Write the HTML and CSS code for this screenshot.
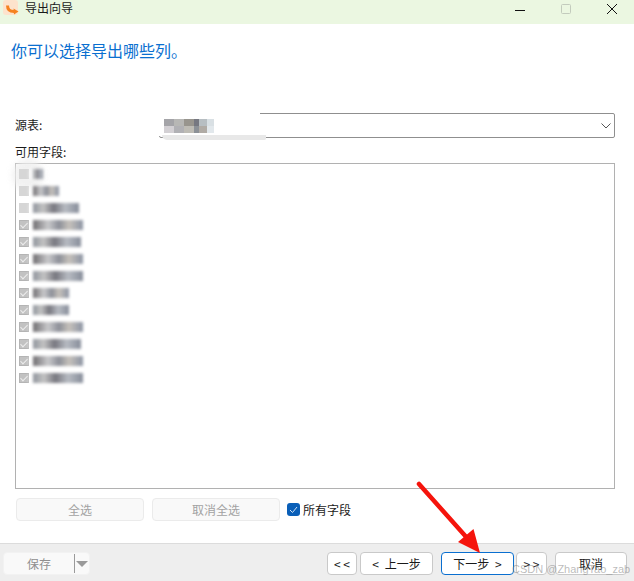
FILE: index.html
```html
<!DOCTYPE html>
<html lang="zh-CN">
<head>
  <meta charset="UTF-8" />
  <title>导出向导</title>
  <link rel="stylesheet" href="styles.css">
</head>
<body>
  <header class="titlebar">
    <div class="app-title">
      <svg class="app-icon" width="16" height="16" viewBox="0 0 16 16">
        <rect x="0" y="0" width="15" height="15" rx="3" fill="#fde3cc"/>
        <path d="M4.5 5.5c0 4 2.500 6 6.500 6" fill="none" stroke="#f58220" stroke-width="3"/>
        <path d="M10.500 8.500l5 3-4.500 3z" fill="#f58220"/>
      </svg>
      <span>导出向导</span>
    </div>
    <div class="win-controls">
      <svg width="12" height="12" viewBox="0 0 12 12"><path d="M1 7.500h10" stroke="#111" stroke-width="1"/></svg>
      <svg width="12" height="12" viewBox="0 0 12 12"><rect x="1.500" y="1.500" width="9" height="9" rx="1" fill="none" stroke="#c3cbbd"/></svg>
      <svg width="12" height="12" viewBox="0 0 12 12"><path d="M1 1l10 10M11 1L1 11" stroke="#111" stroke-width="1"/></svg>
    </div>
  </header>

  <main class="content">
    <h1 class="heading">你可以选择导出哪些列。</h1>

    <div class="source-row">
      <label class="source-label">源表:</label>
      <div class="select">
        <span class="select-value"><i></i></span>
        <svg class="select-arrow" width="10" height="6" viewBox="0 0 10 6"><path d="M.5.5L5 5 9.500.5" fill="none" stroke="#555"/></svg>
      </div>
    </div>

    <div class="fields-label">可用字段:</div>
    <div class="fields-list">
      <span class="list-smudge"></span>
      <div class="field-row"><span class="check faded"></span><span class="blur w10"></span></div>
      <div class="field-row"><span class="check faded"></span><span class="blur w26"></span></div>
      <div class="field-row"><span class="check faded"></span><span class="blur w46"></span></div>
      <div class="field-row"><span class="check"></span><span class="blur w50"></span></div>
      <div class="field-row"><span class="check"></span><span class="blur w48"></span></div>
      <div class="field-row"><span class="check"></span><span class="blur w50"></span></div>
      <div class="field-row"><span class="check"></span><span class="blur w50"></span></div>
      <div class="field-row"><span class="check"></span><span class="blur w36"></span></div>
      <div class="field-row"><span class="check"></span><span class="blur w36"></span></div>
      <div class="field-row"><span class="check"></span><span class="blur w50"></span></div>
      <div class="field-row"><span class="check"></span><span class="blur w48"></span></div>
      <div class="field-row"><span class="check"></span><span class="blur w50"></span></div>
      <div class="field-row"><span class="check"></span><span class="blur w50"></span></div>
    </div>

    <div class="list-actions">
      <button class="btn-off">全选</button>
      <button class="btn-off">取消全选</button>
      <label class="all-fields">
        <span class="check-on">
          <svg width="9" height="8" viewBox="0 0 9 8"><path d="M1 4l2.500 2.500L8 1" fill="none" stroke="#cfe2f7" stroke-width="1"/></svg>
        </span>
        所有字段
      </label>
    </div>
  </main>

  <footer class="footer">
    <div class="save-btn">
      <span class="save-text">保存</span>
      <span class="save-caret"></span>
    </div>
    <div class="nav">
      <button class="btn btn-jump">&lt; &lt;</button>
      <button class="btn btn-prev">&lt; 上一步</button>
      <button class="btn btn-next">下一步 &gt;</button>
      <button class="btn btn-jump btn-last">&gt; &gt;</button>
      <button class="btn btn-cancel">取消</button>
    </div>
  </footer>

  <!-- annotation on top of the screenshot -->
  <svg class="arrow" width="80" height="80" viewBox="0 0 80 80">
    <path d="M3 3L52 58" stroke="#f5140c" stroke-width="4.500" stroke-linecap="round"/>
    <path d="M42 61L57.500 48 64 72z" fill="#f5140c"/>
  </svg>
  <div class="watermark">CSDN @ZhangTao_zab</div>
</body>
</html>
```

FILE: styles.css
```css
* {
  margin: 0;
  padding: 0;
  box-sizing: border-box;
}

html, body {
  width: 634px;
  height: 581px;
  overflow: hidden;
}

body {
  position: relative;
  display: flex;
  flex-direction: column;
  font-family: "Noto Sans CJK SC", "Liberation Sans", sans-serif;
  font-size: 12px;
  color: #1a1a1a;
  background-color: #ffffff;
}

.titlebar {
  display: flex;
  justify-content: space-between;
  align-items: center;
  height: 24px;
  flex: none;
  padding: 0 16px 9px 3px;
  background-color: #ebf7e1;
}

.app-title {
  display: flex;
  align-items: center;
  gap: 6px;
  height: 15px;
}

.app-icon {
  margin-top: 1px;
}

.win-controls {
  display: flex;
  gap: 34px;
  margin-top: 3px;
}

.content {
  flex: 1;
  padding: 0 19px 0 15px;
  display: flex;
  flex-direction: column;
}

.heading {
  font-size: 16px;
  font-weight: 400;
  line-height: 20px;
  margin: 16px 0 0 -4px;
  color: #0a6fd0;
}

.source-row {
  display: flex;
  align-items: center;
  margin-top: 53px;
  height: 25px;
}

.source-label {
  width: 144px;
  flex: none;
  margin-top: -2px;
}

.select {
  flex: 1;
  display: flex;
  justify-content: flex-end;
  align-items: center;
  height: 25px;
  padding-right: 3px;
  border: 1px solid #8f8f8f;
  border-radius: 2px;
  position: relative;
}

.select-value {
  position: absolute;
  left: -2px;
  top: -4px;
  width: 102px;
  height: 26px;
  background-color: #ffffff;
}

.select-value::after {
  content: "";
  position: absolute;
  left: 4px;
  top: 25px;
  width: 104px;
  height: 5px;
  background-color: #e8e8e8;
  border-radius: 0 0 3px 8px;
}

.select-value i {
  display: block;
  width: 50px;
  height: 14px;
  margin: 9px 0 0 6px;
  background-image:
    linear-gradient(90deg, #9b9b9f 0 20%, #b0b0ad 20% 40%, #8d8a82 40% 60%, #686a74 60% 70%, #b0b8bc 70% 85%, #d5dde2 85%),
    linear-gradient(90deg, #cfccd0 0 20%, #a9a9ae 20% 40%, #b7b5ae 40% 60%, #80868c 60% 70%, #a8a29c 70% 85%, #dfe6ea 85%);
  background-size: 100% 50%;
  background-position: top, bottom;
  background-repeat: no-repeat;
  opacity: 0.9;
}

.fields-label {
  margin-top: 6px;
  line-height: 16px;
  height: 19px;
}

.fields-list {
  position: relative;
  height: 326px;
  padding: 1px 0 0 3px;
  border: 1px solid #b1b1b1;
}

/* pale blot over the corner of the list */
.list-smudge {
  position: absolute;
  left: -4px;
  top: -5px;
  width: 32px;
  height: 32px;
  border-radius: 50%;
  background-color: #eeeeee;
  opacity: 0.8;
  filter: blur(3px);
}

.field-row {
  position: relative;
  display: flex;
  align-items: center;
  gap: 4px;
  height: 17px;
}

.check {
  position: relative;
  width: 10px;
  height: 10px;
  background-color: #c2c2c2;
  border: 1px solid #b4b4b4;
}

.check::after {
  content: "";
  position: absolute;
  left: 2px;
  top: 0;
  width: 3px;
  height: 6px;
  border: solid #ececec;
  border-width: 0 1px 1px 0;
  transform: rotate(45deg);
}

.faded {
  background-color: #d6d6d6;
  border-color: #d6d6d6;
}

.faded::after {
  display: none;
}

.blur {
  display: block;
  height: 10px;
  background-image: linear-gradient(90deg, #8f949c, #c3c3c3 22%, #77777f 45%, #b7bbc2 70%, #868c99);
  box-shadow: -3px 0 3px #ffffff;
  filter: blur(1.500px);
}

.field-row:nth-of-type(even) .blur {
  background-image: linear-gradient(90deg, #6f6d70, #c9c9cb 30%, #8c8f98 52%, #c6c1bb 72%, #8b93a3);
}

.w10 { width: 10px; }
.w26 { width: 26px; }
.w36 { width: 36px; }
.w46 { width: 46px; }
.w48 { width: 48px; }
.w50 { width: 50px; }

.list-actions {
  display: flex;
  align-items: center;
  gap: 8px;
  margin-top: 9px;
  padding-left: 1px;
}

.btn-off {
  width: 128px;
  height: 23px;
  font: inherit;
  color: #a2a2a2;
  background-color: #f9f9f9;
  border: 1px solid #ebebeb;
  border-radius: 4px;
}

.all-fields {
  display: flex;
  align-items: center;
  gap: 3px;
  margin-left: -1px;
}

.check-on {
  display: flex;
  justify-content: center;
  align-items: center;
  width: 13px;
  height: 13px;
  background-color: #0a5fb8;
  border-radius: 3px;
}

.footer {
  display: flex;
  justify-content: space-between;
  height: 38px;
  flex: none;
  padding: 8px 7px 0 3px;
  background-color: #eeeeee;
  border-top: 1px solid #dcdcdc;
}

.save-btn {
  display: flex;
  align-items: center;
  width: 87px;
  height: 23px;
  background-color: #f9f9f9;
  border: 1px solid #f2f2f2;
  border-radius: 4px;
  color: #8f8f8f;
}

.save-text {
  width: 70px;
  text-align: center;
}

.save-caret {
  position: relative;
  width: 1px;
  height: 19px;
  background-color: #9a9a9a;
}

.save-caret::after {
  content: "";
  position: absolute;
  left: 2px;
  top: 7px;
  border-style: solid;
  border-width: 6px 6px 0;
  border-color: #9a9a9a transparent transparent;
}

.nav {
  display: flex;
}

.btn {
  height: 23px;
  font: inherit;
  word-spacing: 3px;
  color: #1a1a1a;
  background-color: #ffffff;
  border: 1px solid #c9c9c9;
  border-radius: 4px;
  white-space: pre;
}

.btn-jump {
  width: 30px;
  word-spacing: 0;
}

.btn-prev {
  width: 73px;
  margin-left: 3px;
}

.btn-next {
  width: 73px;
  margin-left: 8px;
  border-color: #0a6fd0;
}

.btn-last {
  width: 31px;
  margin-left: 2px;
}

.btn-cancel {
  width: 72px;
  margin-left: 8px;
}

.arrow {
  position: absolute;
  left: 416px;
  top: 481px;
  pointer-events: none;
}

.watermark {
  position: absolute;
  left: 512px;
  top: 561px;
  font-family: "Liberation Sans", sans-serif;
  font-size: 11px;
  line-height: 16px;
  white-space: nowrap;
  color: rgba(130, 130, 130, 0.55);
}
```
